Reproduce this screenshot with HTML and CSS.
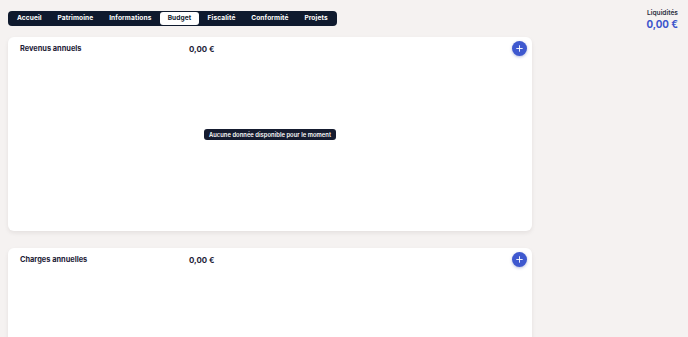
FILE: index.html
```html
<!DOCTYPE html>
<html lang="fr">
<head>
<meta charset="utf-8">
<link rel="stylesheet" href="styles.css">
</head>
<body>
<div class="page">
  <div class="main">
    <nav class="tabs">
      <span class="tab">Accueil</span>
      <span class="tab">Patrimoine</span>
      <span class="tab">Informations</span>
      <span class="tab active">Budget</span>
      <span class="tab">Fiscalité</span>
      <span class="tab">Conformité</span>
      <span class="tab">Projets</span>
    </nav>
    <section class="card">
      <div class="card-head">
        <span class="card-title">Revenus annuels</span>
        <span class="card-value">0,00 €</span>
        <button class="add" aria-label="Ajouter"><svg viewBox="0 0 10 10" width="7" height="7"><path d="M5 1v8M1 5h8" stroke="#fff" stroke-width="1.3" stroke-linecap="round"/></svg></button>
      </div>
      <div class="card-body">
        <span class="empty">Aucune donnée disponible pour le moment</span>
      </div>
    </section>
    <section class="card">
      <div class="card-head">
        <span class="card-title">Charges annuelles</span>
        <span class="card-value">0,00 €</span>
        <button class="add" aria-label="Ajouter"><svg viewBox="0 0 10 10" width="7" height="7"><path d="M5 1v8M1 5h8" stroke="#fff" stroke-width="1.3" stroke-linecap="round"/></svg></button>
      </div>
      <div class="card-body"></div>
    </section>
  </div>
  <aside class="side">
    <div class="liq-label">Liquidités</div>
    <div class="liq-value">0,00 €</div>
  </aside>
</div>
</body>
</html>
```

FILE: styles.css
```css
* { box-sizing: border-box; }
html, body { margin: 0; padding: 0; }
body {
  background: #f5f2f1;
  font-family: Inter, "Noto Sans", sans-serif;
  color: #1d2136;
  overflow: hidden;
}
.page {
  display: flex;
  padding: 11px 10px 0 8px;
  gap: 10px;
}
.main {
  width: 524px;
  display: flex;
  flex-direction: column;
  align-items: flex-start;
}
.tabs {
  display: flex;
  align-items: center;
  background: #0f1a2e;
  border-radius: 4px;
  padding: 1px;
  height: 15px;
  margin-bottom: 11px;
}
.tab {
  color: #fff;
  font-size: 6.6px;
  font-weight: 700;
  padding: 0 7.9px;
  line-height: 13px;
  height: 13px;
  border-radius: 3px;
  letter-spacing: 0.1px;
}
.tab.active {
  background: #fff;
  color: #0f1a2e;
  padding: 0 7.3px;
  margin: 0 1px;
}
.card {
  width: 524px;
  height: 194px;
  background: #fff;
  border-radius: 6px;
  box-shadow: 0 2px 4px rgba(40, 30, 30, 0.08);
  margin-bottom: 17px;
  display: flex;
  flex-direction: column;
  flex-shrink: 0;
}
.card-head {
  display: flex;
  align-items: flex-start;
  padding: 6px 5px 0 12px;
  height: 19px;
}
.card-title {
  width: 169px;
  font-size: 7.4px;
  font-weight: 700;
  color: #1d2136;
  line-height: 12px;
}
.card-value {
  font-size: 7.9px;
  font-weight: 700;
  color: #1d2136;
  line-height: 12px;
  flex: 1;
}
.add {
  width: 15px;
  height: 15px;
  border-radius: 50%;
  border: none;
  background: #3e58cf;
  padding: 0;
  margin-top: -2px;
  display: flex;
  align-items: center;
  justify-content: center;
  box-shadow: 0 1px 3px rgba(40, 60, 160, 0.35);
}
.card-body {
  flex: 1;
  display: flex;
  align-items: center;
  justify-content: center;
  padding-bottom: 18px;
}
.empty {
  background: #151b2f;
  color: #fff;
  font-size: 5.8px;
  font-weight: 600;
  padding: 0 4.5px;
  line-height: 11px;
  border-radius: 3px;
  letter-spacing: 0.05px;
}
.side {
  flex: 1;
  display: flex;
  flex-direction: column;
  align-items: flex-end;
  margin-top: -2px;
}
.liq-label {
  font-size: 6.6px;
  font-weight: 600;
  color: #2b2f40;
  line-height: 9px;
}
.liq-value {
  font-size: 9.8px;
  font-weight: 700;
  color: #3c55cc;
  line-height: 13px;
}
```
